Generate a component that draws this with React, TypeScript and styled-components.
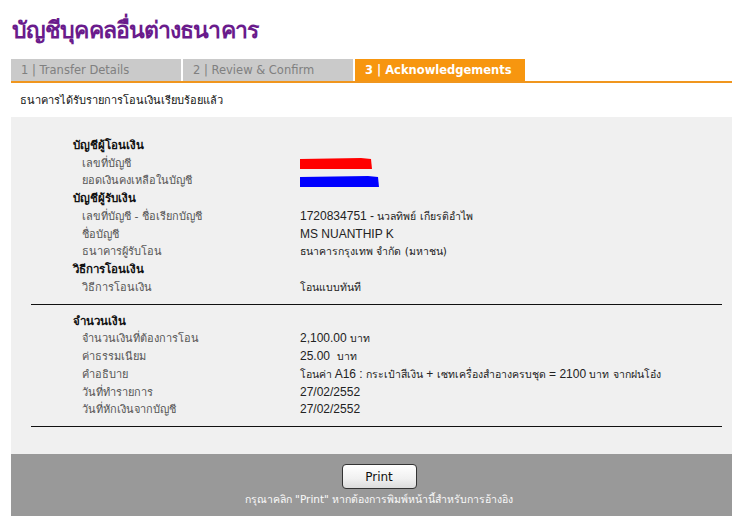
import React from "react";
import styled, { createGlobalStyle } from "styled-components";

const Global = createGlobalStyle`
  html, body { margin: 0; padding: 0; background: #ffffff; overflow: hidden; }
  body { font-family: Tahoma, "DejaVu Sans", "Noto Sans", sans-serif; }
`;

const Page = styled.div`
  width: 747px;
  height: 517px;
  overflow: hidden;
  padding-left: 11px;
  box-sizing: border-box;
`;

const Title = styled.h1`
  margin: 0;
  padding: 14px 0 0 1px;
  height: 45px;
  box-sizing: border-box;
  font-family: "Noto Sans", "DejaVu Sans", sans-serif;
  font-size: 23px;
  font-weight: 700;
  color: #6a1b8c;
  letter-spacing: -0.9px;
  line-height: 31px;
`;

const Tabs = styled.div`
  display: flex;
  gap: 2px;
  margin-top: 14px;
  border-bottom: 2px solid #f0961e;
`;

const Tab = styled.div<{ $active?: boolean }>`
  width: 170px;
  height: 22px;
  box-sizing: border-box;
  padding-left: 10px;
  display: flex;
  align-items: center;
  font-family: "DejaVu Sans", Verdana, sans-serif;
  font-size: 11.5px;
  font-weight: ${(p) => (p.$active ? 700 : 400)};
  color: ${(p) => (p.$active ? "#ffffff" : "#808080")};
  background: ${(p) => (p.$active ? "#f7960f" : "#cacaca")};
`;

const Message = styled.div`
  height: 34px;
  padding-left: 9px;
  display: flex;
  align-items: center;
  font-size: 11px;
  color: #111;
`;

const Panel = styled.div`
  background: #f0f0f0;
  padding: 20px 25px 19px 20px;
`;

const Section = styled.div`
  display: grid;
  grid-template-columns: 227px 1fr;
  padding-left: 42px;
`;

const Heading = styled.div`
  grid-column: 1 / -1;
  height: 17.6px;
  line-height: 17.6px;
  font-size: 11.5px;
  font-weight: 700;
  color: #111;
`;

const Label = styled.div`
  height: 17.8px;
  line-height: 17.8px;
  padding-left: 9px;
  font-size: 11px;
  color: #555;
`;

const Value = styled.div`
  height: 17.8px;
  line-height: 17.8px;
  font-family: "Liberation Sans", Arial, sans-serif;
  font-size: 12px;
  color: #222;
  white-space: pre;
  display: flex;
  align-items: center;
`;

const Th = styled.span`
  font-family: Tahoma, "DejaVu Sans", sans-serif;
  font-size: 10.5px;
`;

const Rule = styled.hr`
  border: none;
  border-top: 1.5px solid #111;
  margin: 7px 0 8px 0;
`;

const Footer = styled.div`
  background: #999999;
  height: 62px;
  display: flex;
  flex-direction: column;
  align-items: center;
  padding-top: 10px;
  box-sizing: border-box;
`;

const PrintButton = styled.button`
  width: 75px;
  height: 25px;
  border: 1px solid #333;
  border-radius: 4px;
  background: linear-gradient(#ffffff, #f0f0f0 60%, #dcdcdc);
  font-family: Tahoma, "DejaVu Sans", sans-serif;
  font-size: 12px;
  color: #111;
  padding: 0;
`;

const Caption = styled.div`
  margin-top: 2px;
  font-size: 10.5px;
  color: #fafafa;
`;

const Redact = ({ color, width }: { color: string; width: number }) => (
  <svg width={width + 2} height="13" viewBox={`0 0 ${width + 2} 13`}>
    <path
      d={`M0 2 L${width - 10} 1 L${width} 2 L${width + 1} 12 L0 12 Z`}
      fill={color}
    />
  </svg>
);

export default function App() {
  return (
    <Page>
      <Global />
      <Title>บัญชีบุคคลอื่นต่างธนาคาร</Title>
      <Tabs>
        <Tab>1 | Transfer Details</Tab>
        <Tab>2 | Review &amp; Confirm</Tab>
        <Tab $active>3 | Acknowledgements</Tab>
      </Tabs>
      <Message>ธนาคารได้รับรายการโอนเงินเรียบร้อยแล้ว</Message>
      <Panel>
        <Section>
          <Heading>บัญชีผู้โอนเงิน</Heading>
          <Label>เลขที่บัญชี</Label>
          <Value><Redact color="#ff0000" width={71} /></Value>
          <Label>ยอดเงินคงเหลือในบัญชี</Label>
          <Value><Redact color="#0000ff" width={78} /></Value>
          <Heading>บัญชีผู้รับเงิน</Heading>
          <Label>เลขที่บัญชี - ชื่อเรียกบัญชี</Label>
          <Value>1720834751 - <Th>นวลทิพย์ เกียรติอำไพ</Th></Value>
          <Label>ชื่อบัญชี</Label>
          <Value>MS NUANTHIP K</Value>
          <Label>ธนาคารผู้รับโอน</Label>
          <Value><Th>ธนาคารกรุงเทพ จำกัด (มหาชน)</Th></Value>
          <Heading>วิธีการโอนเงิน</Heading>
          <Label>วิธีการโอนเงิน</Label>
          <Value><Th>โอนแบบทันที</Th></Value>
        </Section>
        <Rule />
        <Section>
          <Heading>จำนวนเงิน</Heading>
          <Label>จำนวนเงินที่ต้องการโอน</Label>
          <Value>2,100.00 <Th>บาท</Th></Value>
          <Label>ค่าธรรมเนียม</Label>
          <Value>25.00  <Th>บาท</Th></Value>
          <Label>คำอธิบาย</Label>
          <Value><Th>โอนค่า</Th> A16 : <Th>กระเป๋าสีเงิน</Th> + <Th>เซทเครื่องสำอางครบชุด</Th> = 2100 <Th>บาท จากฝนโอ๋ง</Th></Value>
          <Label>วันที่ทำรายการ</Label>
          <Value>27/02/2552</Value>
          <Label>วันที่หักเงินจากบัญชี</Label>
          <Value>27/02/2552</Value>
        </Section>
        <Rule />
      </Panel>
      <Footer>
        <PrintButton>Print</PrintButton>
        <Caption>กรุณาคลิก "Print" หากต้องการพิมพ์หน้านี้สำหรับการอ้างอิง</Caption>
      </Footer>
    </Page>
  );
}
